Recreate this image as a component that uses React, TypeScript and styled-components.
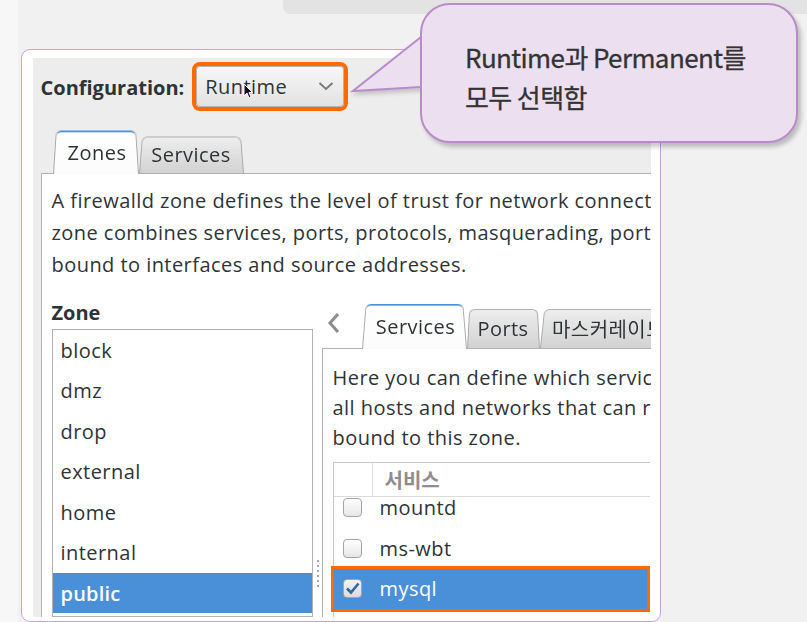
import React from "react";
import styled, { createGlobalStyle, css } from "styled-components";

const UI = `"Open Sans", "Noto Sans CJK KR", sans-serif`;
const BORDER = "#b3b3b3";
const BLUE = "#4a90d9";
const ORANGE = "#ff6a00";

const GlobalStyle = createGlobalStyle`
  html, body { margin: 0; padding: 0; }
  body { background: #f1f1f1; font-family: ${UI}; color: #2e3436; }
`;

const Stage = styled.div`
  position: relative;
  width: 807px;
  height: 622px;
  overflow: hidden;
  background: linear-gradient(to right, #f7f7f7 0, #f7f7f7 18px, #f1f1f1 18px);
`;

const TopStrip = styled.div`
  height: 14px;
  margin-left: 283px;
  background: #e3e3e3;
  border-bottom-left-radius: 7px;
`;

const Frame = styled.div`
  box-sizing: border-box;
  margin: 35px 0 0 21px;
  width: 640px;
  height: 573px;
  border: 1.5px solid #c9a5d8;
  border-radius: 9px;
  background: #fff;
  padding: 7.5px 9.5px 4px 10.5px;
`;

const Window = styled.div`
  height: 100%;
  background: #ededed;
  overflow: hidden;
  display: flex;
  flex-direction: column;
  letter-spacing: 0.45px;
`;

const ConfigRow = styled.div`
  flex: none;
  display: flex;
  align-items: center;
  gap: 12px;
  height: 57px;
  padding-left: 8px;
`;

const ConfigLabel = styled.span`
  font-size: 20px;
  font-weight: 700;
  letter-spacing: 0;
  color: #2e3436;
  padding-top: 3px;
`;

const Combo = styled.div`
  position: relative;
  box-sizing: border-box;
  width: 148px;
  height: 41px;
  display: flex;
  align-items: center;
  justify-content: space-between;
  padding: 0 9px 0 8px;
  border: 1px solid #b4b4b4;
  border-radius: 4px;
  background: linear-gradient(#f7f7f7, #e2e2e2);
  outline: 4px solid ${ORANGE};
  font-size: 20px;
  color: #2e3436;
`;

const Cursor = styled.svg`
  position: absolute;
  left: 46px;
  top: 16px;
`;

const Notebook = styled.div`
  flex: 1;
  min-height: 0;
  display: flex;
  flex-direction: column;
  margin: 15px 0 0 8px;
`;

const TabStrip = styled.div<{ $h: number; $pad: number }>`
  flex: none;
  position: relative;
  z-index: 1;
  display: flex;
  align-items: flex-end;
  height: ${(p) => p.$h}px;
  padding-left: ${(p) => p.$pad}px;
`;

const Tab = styled.div<{ $active?: boolean; $w: number; $h: number }>`
  position: relative;
  box-sizing: border-box;
  flex: none;
  width: ${(p) => p.$w}px;
  height: ${(p) => p.$h}px;
  margin-bottom: ${(p) => (p.$active ? -1 : 0)}px;
  display: flex;
  align-items: center;
  justify-content: center;
  padding-top: ${(p) => (p.$active ? 2 : 0)}px;
  padding-left: ${(p) => (p.$active ? 3 : 0)}px;
  font-size: 20px;
  white-space: nowrap;
  color: #2e3436;
  z-index: ${(p) => (p.$active ? 2 : 1)};
  &::before {
    content: "";
    position: absolute;
    left: 0;
    right: 0;
    bottom: 0;
    top: -3px;
    z-index: -1;
    border: 1px solid #aaaaaa;
    border-bottom: none;
    border-radius: 6px 6px 0 0;
    transform: perspective(90px) rotateX(8deg);
    transform-origin: bottom;
    ${(p) =>
      p.$active
        ? css`
            background: linear-gradient(#ffffff, #fbfbfb);
            border-top: 2px solid ${BLUE};
          `
        : css`
            background: linear-gradient(#eeeeee, #d2d2d2);
          `}
  }
`;

const Page = styled.div<{ $pt: number }>`
  flex: 1;
  min-height: 0;
  width: 760px;
  background: #fff;
  border-top: 1px solid ${BORDER};
  border-left: 1px solid ${BORDER};
  padding: ${(p) => p.$pt}px 0 0 10px;
  display: flex;
  flex-direction: column;
`;

const Desc = styled.div<{ $lh: number }>`
  flex: none;
  font-size: 20px;
  line-height: ${(p) => p.$lh}px;
  white-space: nowrap;
  color: #2e3436;
`;

const Panes = styled.div`
  flex: 1;
  display: flex;
  margin-top: 20px;
  min-height: 0;
`;

const LeftPane = styled.div`
  flex: none;
  width: 261px;
  display: flex;
  flex-direction: column;
`;

const ZoneLabel = styled.div`
  font-size: 20px;
  font-weight: 700;
  letter-spacing: 0;
  line-height: 24px;
  margin-bottom: 4px;
`;

const ZoneList = styled.div`
  flex: 1;
  background: #fff;
  border: 1px solid ${BORDER};
`;

const ZoneRow = styled.div<{ $selected?: boolean }>`
  height: 40.5px;
  display: flex;
  align-items: center;
  padding: 1px 0 0 8px;
  box-sizing: border-box;
  font-size: 20px;
  ${(p) =>
    p.$selected &&
    css`
      background: ${BLUE};
      color: #fff;
      font-weight: 600;
      letter-spacing: 0.2px;
    `}
`;

const Handle = styled.div`
  flex: none;
  width: 9px;
  display: flex;
  flex-direction: column;
  align-items: flex-start;
  gap: 3px;
  padding: 259px 0 0 4px;
  box-sizing: border-box;
`;

const Dot = styled.span`
  width: 2px;
  height: 2px;
  background: #a8a8a8;
`;

const RightPane = styled.div`
  flex: none;
  width: 420px;
  display: flex;
  flex-direction: column;
`;

const Arrow = styled.svg`
  flex: none;
  align-self: flex-start;
  margin: 11px 21px 0 5px;
`;

const Tree = styled.div`
  flex: 1;
  width: 317px;
  box-sizing: border-box;
  margin-top: 9px;
  background: #fff;
  border-top: 1px solid #c9c9c9;
  border-left: 1px solid #c9c9c9;
  display: flex;
  flex-direction: column;
`;

const TreeHeader = styled.div`
  flex: none;
  position: relative;
  z-index: 2;
  height: 33px;
  display: flex;
  background: #fff;
  border-bottom: 1px solid #dcdcdc;
`;

const HeadCell = styled.div<{ $w?: number }>`
  box-sizing: border-box;
  ${(p) => (p.$w ? `width: ${p.$w}px; flex: none;` : "flex: 1;")}
  border-right: ${(p) => (p.$w ? "1px solid #e2e2e2" : "none")};
  padding-left: 12px;
  display: flex;
  align-items: center;
  font-size: 20px;
  font-weight: 700;
  letter-spacing: 0;
  color: #8e8e8e;
`;

const TreeBody = styled.div`
  margin-top: -9px;
`;

const TreeRow = styled.div<{ $selected?: boolean }>`
  box-sizing: border-box;
  height: 40.5px;
  display: flex;
  align-items: center;
  padding-left: 9px;
  font-size: 20px;
  color: #2e3436;
  ${(p) =>
    p.$selected &&
    css`
      width: calc(100% - 3px);
      background: ${BLUE};
      color: #fff;
      outline: 3px solid ${ORANGE};
    `}
`;

const Check = styled.span<{ $on?: boolean }>`
  flex: none;
  box-sizing: border-box;
  width: 19px;
  height: 19px;
  margin-right: 18px;
  border: 1px solid #a5a5a5;
  border-radius: 4px;
  background: ${(p) => (p.$on ? "linear-gradient(#f2f2f2, #dcdcdc)" : "linear-gradient(#ffffff, #e6e6e6)")};
  display: flex;
  align-items: center;
  justify-content: center;
`;

const Bubble = styled.div`
  position: absolute;
  left: 420px;
  top: 3px;
  box-sizing: border-box;
  width: 378px;
  height: 140px;
  border: 2px solid #b98bcb;
  border-radius: 30px;
  background: #ece0f0;
  box-shadow: 3px 4px 4px rgba(0, 0, 0, 0.22);
  padding: 32px 0 0 43px;
  font-family: "Noto Sans CJK KR", sans-serif;
  font-size: 26px;
  line-height: 40px;
  letter-spacing: -0.6px;
  color: #333333;
  -webkit-text-stroke: 0.3px #333333;
`;

const Tail = styled.svg`
  position: absolute;
  left: 350px;
  top: 30px;
  filter: drop-shadow(2px 3px 2px rgba(0, 0, 0, 0.18));
`;

const zones = ["block", "dmz", "drop", "external", "home", "internal", "public"];
const services: { name: string; on?: boolean }[] = [
  { name: "mountd" },
  { name: "ms-wbt" },
  { name: "mysql", on: true },
  { name: "nfs" },
];

export default function App() {
  return (
    <>
      <GlobalStyle />
      <Stage>
        <TopStrip />
        <Frame>
          <Window>
            <ConfigRow>
              <ConfigLabel>Configuration:</ConfigLabel>
              <Combo>
                <span>Runtime</span>
                <svg width="16" height="10" viewBox="0 0 16 10">
                  <path d="M1.5 2 L8 8 L14.5 2" fill="none" stroke="#7a7a7a" strokeWidth="2" />
                </svg>
                <Cursor width="10" height="16" viewBox="0 0 10 16">
                  <path d="M1 1 L1 13 L4 10 L6 15 L8 14 L6 9.5 L9.5 9.5 Z" fill="#111" stroke="#fff" strokeWidth="1" />
                </Cursor>
              </Combo>
            </ConfigRow>
            <Notebook>
              <TabStrip $h={43} $pad={12}>
                <Tab $active $w={86} $h={44}>Zones</Tab>
                <Tab $w={105} $h={36}>Services</Tab>
              </TabStrip>
              <Page $pt={11}>
                <Desc $lh={32}>
                  <div>A firewalld zone defines the level of trust for network connections, interfaces and source addresses. The</div>
                  <div>zone combines services, ports, protocols, masquerading, port/packet forwarding, icmp filters and rich rules. The zone can be</div>
                  <div>bound to interfaces and source addresses.</div>
                </Desc>
                <Panes>
                  <LeftPane>
                    <ZoneLabel>Zone</ZoneLabel>
                    <ZoneList>
                      {zones.map((z) => (
                        <ZoneRow key={z} $selected={z === "public"}>
                          {z}
                        </ZoneRow>
                      ))}
                    </ZoneList>
                  </LeftPane>
                  <Handle>
                    {Array.from({ length: 6 }).map((_, i) => (
                      <Dot key={i} />
                    ))}
                  </Handle>
                  <RightPane>
                    <TabStrip $h={47} $pad={0}>
                      <Arrow width="14" height="22" viewBox="0 0 14 22">
                        <path d="M11 2 L3 11 L11 20" fill="none" stroke="#8c8c8c" strokeWidth="3" />
                      </Arrow>
                      <Tab $active $w={105} $h={46}>Services</Tab>
                      <Tab $w={73} $h={39}>Ports</Tab>
                      <Tab $w={138} $h={39}>마스커레이드</Tab>
                    </TabStrip>
                    <Page $pt={14}>
                      <Desc $lh={30}>
                        <div>Here you can define which services are trusted in the zone. Trusted services are accessible from</div>
                        <div>all hosts and networks that can reach the machine from connections, interfaces and sources</div>
                        <div>bound to this zone.</div>
                      </Desc>
                      <Tree>
                        <TreeHeader>
                          <HeadCell $w={39} />
                          <HeadCell>서비스</HeadCell>
                        </TreeHeader>
                        <TreeBody>
                          {services.map((s) => (
                            <TreeRow key={s.name} $selected={s.on}>
                              <Check $on={s.on}>
                                {s.on && (
                                  <svg width="15" height="13" viewBox="0 0 15 13">
                                    <path d="M2 6.5 L6 10.5 L13.5 1.5" fill="none" stroke="#3465a4" strokeWidth="2.6" />
                                  </svg>
                                )}
                              </Check>
                              {s.name}
                            </TreeRow>
                          ))}
                        </TreeBody>
                      </Tree>
                    </Page>
                  </RightPane>
                </Panes>
              </Page>
            </Notebook>
          </Window>
        </Frame>
        <Tail width="76" height="66" viewBox="0 0 76 66">
          <polygon points="3,61 75,5 75,58" fill="#ece0f0" />
          <polyline points="71,7 3,61 71,57" fill="none" stroke="#b98bcb" strokeWidth="2" />
        </Tail>
        <Bubble>
          <div>Runtime과 Permanent를</div>
          <div>모두 선택함</div>
        </Bubble>
      </Stage>
    </>
  );
}
